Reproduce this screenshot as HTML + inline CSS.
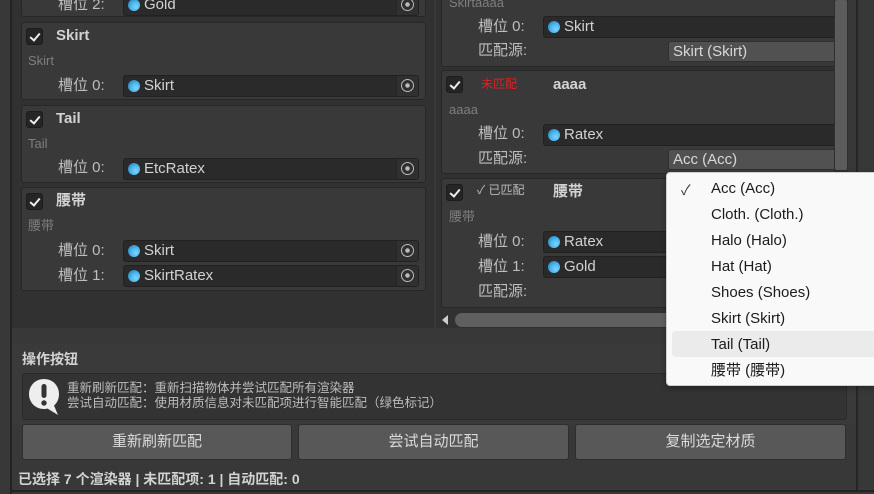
<!DOCTYPE html>
<html><head><meta charset="utf-8"><style>
*{margin:0;padding:0;box-sizing:border-box}
body{width:874px;height:494px;overflow:hidden;background:#383838;position:relative;font-family:"Liberation Sans","Noto Sans CJK SC",sans-serif;color:#c8c8c8;font-size:14px}
.a{position:absolute}
.box{position:absolute;background:#393939;border:1px solid #272727;border-radius:3px}
.cb{position:absolute;width:17px;height:17px;background:#252525;border:1px solid #1c1c1c;border-radius:3px}
.cb:after{content:"";position:absolute;left:5px;top:2px;width:4px;height:8px;border:solid #eee;border-width:0 2px 2px 0;transform:rotate(40deg)}
.t{position:absolute;font-weight:bold;font-size:15px;color:#d2d2d2;line-height:16px}
.s{position:absolute;font-size:13px;color:#7e7e7e;line-height:14px}
.l{position:absolute;font-size:15px;color:#bdbdbd;line-height:16px}
.f{position:absolute;height:22px;background:#2a2a2a;border:1px solid #212121;border-radius:3px;font-size:15px;color:#d2d2d2;line-height:20px;padding-left:20px}
.f:before{content:"";position:absolute;left:4px;top:4px;width:12px;height:12px;border-radius:50%;background:radial-gradient(circle at 65% 65%,#7fd3ff 0,#4ab6ef 45%,#1d6f9b 100%)}
.tg{position:absolute;right:0;top:0;width:22px;height:20px;background:#303030;border-left:1px solid #262626}
.tg:after{content:"";position:absolute;left:4px;top:3px;width:13px;height:13px;box-sizing:border-box;border:1.5px solid #bbb;border-radius:50%;background:radial-gradient(circle,#bbb 0 2px,transparent 2.5px)}
.dd{position:absolute;height:21px;background:#515151;border:1px solid #303030;border-radius:3px;font-size:15px;color:#d8d8d8;line-height:19px;padding-left:4px}
.mi{position:absolute;left:711px;font-size:15px;color:#1b1b1b;line-height:18px}
.btn{position:absolute;top:424px;height:36px;background:#585858;border:1px solid #2e2e2e;border-radius:3px;text-align:center;line-height:34px;font-size:15px;color:#dadada}
</style></head><body>
<div class="a" style="left:10px;top:0;width:2px;height:494px;background:#232323"></div>
<div class="a" style="left:12px;top:490px;width:862px;height:2px;background:#232323"></div>
<div class="a" style="left:856px;top:0;width:2px;height:490px;background:#262626"></div>
<div class="a" style="left:12px;top:0;width:422px;height:328px;background:#313131"></div>
<div class="a" style="left:436px;top:0;width:398px;height:328px;background:#313131"></div>
<div class="a" style="left:834px;top:0;width:14px;height:328px;background:#303030"></div>
<div class="a" style="left:835px;top:0;width:12px;height:170px;background:#5c5c5c;border-radius:2px"></div>

<!-- left column -->
<div class="box" style="left:21px;top:-10px;width:405px;height:27px"></div>
<div class="l" style="left:58px;top:-3px">槽位 2:</div>
<div class="f" style="left:123px;top:-6px;width:296px">Gold<div class="tg"></div></div>

<div class="box" style="left:21px;top:22px;width:405px;height:78px"></div>
<div class="cb" style="left:26px;top:28px"></div>
<div class="t" style="left:56px;top:28px">Skirt</div>
<div class="s" style="left:28px;top:54px">Skirt</div>
<div class="l" style="left:58px;top:78px">槽位 0:</div>
<div class="f" style="left:123px;top:75px;width:296px">Skirt<div class="tg"></div></div>

<div class="box" style="left:21px;top:105px;width:405px;height:78px"></div>
<div class="cb" style="left:26px;top:111px"></div>
<div class="t" style="left:56px;top:111px">Tail</div>
<div class="s" style="left:28px;top:137px">Tail</div>
<div class="l" style="left:58px;top:160px">槽位 0:</div>
<div class="f" style="left:123px;top:158px;width:296px">EtcRatex<div class="tg"></div></div>

<div class="box" style="left:21px;top:187px;width:405px;height:104px"></div>
<div class="cb" style="left:26px;top:193px"></div>
<div class="t" style="left:56px;top:193px">腰带</div>
<div class="s" style="left:28px;top:219px">腰带</div>
<div class="l" style="left:58px;top:243px">槽位 0:</div>
<div class="f" style="left:123px;top:240px;width:296px">Skirt<div class="tg"></div></div>
<div class="l" style="left:58px;top:268px">槽位 1:</div>
<div class="f" style="left:123px;top:265px;width:296px">SkirtRatex<div class="tg"></div></div>

<!-- right column -->
<div style="position:absolute;left:436px;top:0;width:398px;height:328px;overflow:hidden">
<div class="box" style="left:5px;top:-10px;width:410px;height:77px"></div>
<div class="s" style="left:13px;top:-4px">Skirtaaaa</div>
<div class="l" style="left:42px;top:19px">槽位 0:</div>
<div class="f" style="left:107px;top:16px;width:300px">Skirt</div>
<div class="l" style="left:42px;top:43px">匹配源:</div>
<div class="dd" style="left:232px;top:41px;width:200px">Skirt (Skirt)</div>

<div class="box" style="left:5px;top:70px;width:410px;height:104px"></div>
<div class="cb" style="left:10px;top:76px"></div>
<div class="a" style="left:45px;top:75px;font-size:12px;color:#e02020">未匹配</div>
<div class="t" style="left:117px;top:77px">aaaa</div>
<div class="s" style="left:13px;top:103px">aaaa</div>
<div class="l" style="left:42px;top:126px">槽位 0:</div>
<div class="f" style="left:107px;top:124px;width:300px">Ratex</div>
<div class="l" style="left:42px;top:151px">匹配源:</div>
<div class="dd" style="left:232px;top:149px;width:200px">Acc (Acc)</div>

<div class="box" style="left:5px;top:178px;width:410px;height:130px"></div>
<div class="cb" style="left:10px;top:184px"></div>
<div class="a" style="left:41px;top:181px;font-size:12px;color:#bbb">✓ 已匹配</div>
<div class="t" style="left:117px;top:184px">腰带</div>
<div class="s" style="left:13px;top:210px">腰带</div>
<div class="l" style="left:42px;top:234px">槽位 0:</div>
<div class="f" style="left:107px;top:231px;width:300px">Ratex</div>
<div class="l" style="left:42px;top:259px">槽位 1:</div>
<div class="f" style="left:107px;top:256px;width:300px">Gold</div>
<div class="l" style="left:42px;top:284px">匹配源:</div>
<div class="a" style="left:6px;top:315px;width:0;height:0;border-top:5px solid transparent;border-bottom:5px solid transparent;border-right:6px solid #ccc"></div>
<div class="a" style="left:19px;top:313px;width:400px;height:14px;background:#5f5f5f;border-radius:7px"></div>
</div>

<!-- bottom section -->
<div class="a" style="left:12px;top:344px;width:844px;height:80px;background:#3a3a3a"></div>
<div class="t" style="left:22px;top:351px;font-size:14px">操作按钮</div>
<div class="a" style="left:22px;top:373px;width:825px;height:47px;background:#333;border:1px solid #2a2a2a;border-radius:3px"></div>
<svg class="a" style="left:28px;top:378px" width="34" height="38" viewBox="0 0 34 38"><path d="M16 1C7.5 1 1 7.5 1 16s6.5 15 15 15c1.5 0 2.5-.2 3.5-.5L30 37l-4-9.5C29.5 24.5 31 20.5 31 16 31 7.5 24.5 1 16 1z" fill="#eee"/><rect x="13.5" y="6" width="5" height="14" rx="2.5" fill="#333"/><circle cx="16" cy="25" r="2.7" fill="#333"/></svg>
<div class="a" style="left:67px;top:381px;font-size:12.5px;color:#bdbdbd;line-height:15px">重新刷新匹配：重新扫描物体并尝试匹配所有渲染器<br>尝试自动匹配：使用材质信息对未匹配项进行智能匹配（绿色标记）</div>
<div class="btn" style="left:22px;width:270px">重新刷新匹配</div>
<div class="btn" style="left:298px;width:271px">尝试自动匹配</div>
<div class="btn" style="left:575px;width:271px">复制选定材质</div>
<div class="t" style="left:18px;top:471px;font-size:14px">已选择 7 个渲染器 | 未匹配项: 1 | 自动匹配: 0</div>

<!-- dropdown menu -->
<div class="a" style="left:666px;top:172px;width:212px;height:214px;background:#f9f9f9;border:1px solid #cfcfcf;border-radius:4px;box-shadow:0 2px 6px rgba(0,0,0,.3)"></div>
<div class="a" style="left:672px;top:331px;width:204px;height:26px;background:#ebebeb;border-radius:4px"></div>
<div class="a" style="left:681px;top:180px;font-size:14px;color:#333">✓</div>
<div class="mi" style="top:180px">Acc (Acc)</div>
<div class="mi" style="top:206px">Cloth. (Cloth.)</div>
<div class="mi" style="top:232px">Halo (Halo)</div>
<div class="mi" style="top:258px">Hat (Hat)</div>
<div class="mi" style="top:284px">Shoes (Shoes)</div>
<div class="mi" style="top:310px">Skirt (Skirt)</div>
<div class="mi" style="top:336px">Tail (Tail)</div>
<div class="mi" style="top:362px">腰带 (腰带)</div>
</body></html>
